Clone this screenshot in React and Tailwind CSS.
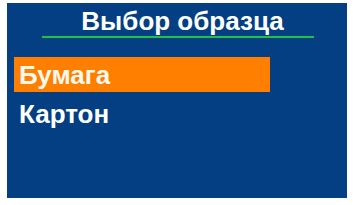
import React from 'react';

const items = ['Бумага', 'Картон'];

const App = () => {
  const selected = 0;

  return (
    <div className="w-[353px] h-[205px] bg-white pt-[3px] pl-[7px]" style={{ fontFamily: '"Liberation Sans", Arial, sans-serif' }}>
      <div className="w-[340px] h-[195px] bg-[#033f82] flex flex-col">
        <div className="pt-[4px] pl-[11px] text-center text-white font-bold text-[26px] leading-[29px]">
          Выбор образца
        </div>
        <div className="ml-[35px] w-[272px] h-[2px] bg-[#22c044]" />
        <div className="mt-[19px] flex flex-col gap-[7px]">
          {items.map((item, i) => (
            <div
              key={item}
              className={
                i === selected
                  ? 'ml-[7px] w-[256px] h-[35px] bg-[#ff8000] pt-[3px] pl-[5px] text-[#fff8ec] font-bold text-[26px] leading-[31px]'
                  : 'ml-[7px] w-[256px] h-[35px] pl-[5px] text-white font-bold text-[26px] leading-[31px]'
              }
            >
              {item}
            </div>
          ))}
        </div>
      </div>
    </div>
  );
};

export default App;
